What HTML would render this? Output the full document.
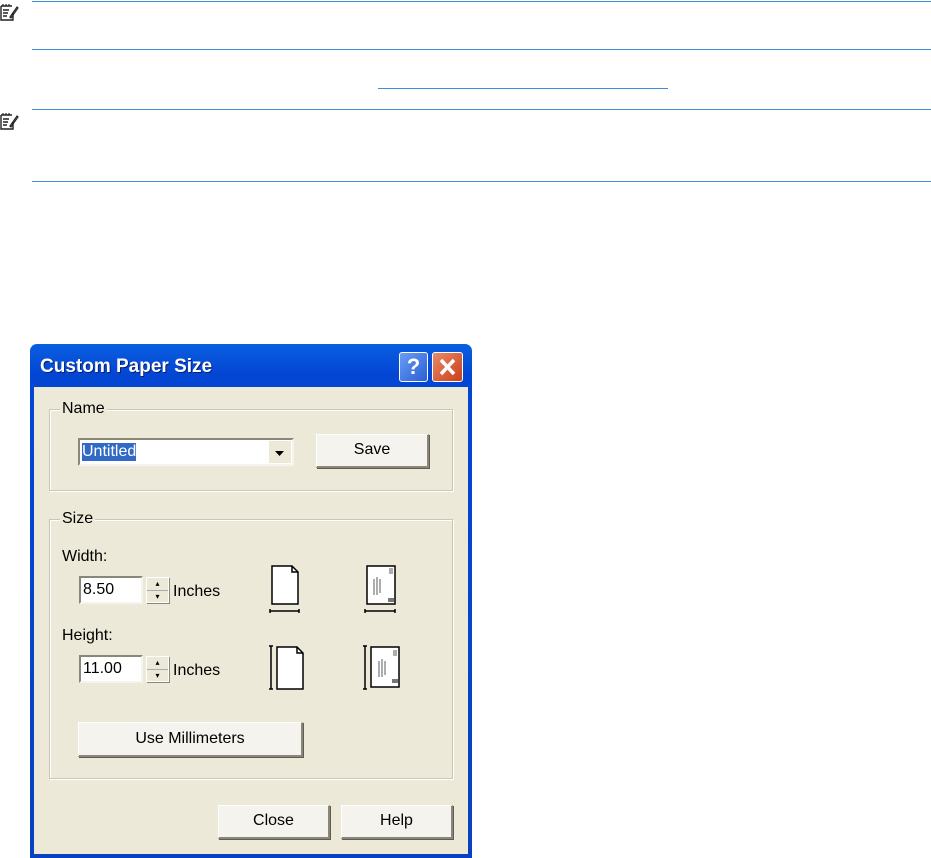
<!DOCTYPE html>
<html><head><style>
body{margin:0;width:931px;height:858px;background:#fff;position:relative;overflow:hidden;font-family:"Liberation Sans",sans-serif;}
.a{position:absolute;}
.hl{position:absolute;height:1px;background:#3f8fd8;}
.t{font-size:16px;color:#000;}
.btn{position:absolute;background:#f4f3ee;border:1px solid #fff;border-right:2px solid #8a8778;border-bottom:2px solid #8a8778;box-sizing:border-box;font-size:16px;text-align:center;box-shadow:1px 1px 0 #5e5c55;}
.grp{position:absolute;border:1px solid #c9c6b6;box-shadow:inset 1px 1px 0 #fff,1px 1px 0 #fff;}
.inp{position:absolute;background:#fff;border:2px solid;border-color:#8a8778 #f4f3ee #f4f3ee #8a8778;box-sizing:border-box;font-size:16px;}
</style></head><body>
<div class="hl" style="left:32px;top:1px;width:899px"></div>
<div class="hl" style="left:32px;top:49px;width:899px"></div>
<div class="hl" style="left:378px;top:88px;width:290px"></div>
<div class="hl" style="left:32px;top:109px;width:899px"></div>
<div class="hl" style="left:32px;top:181px;width:899px"></div>
<svg class="a" style="left:0;top:2px" width="20" height="20" viewBox="0 0 20 20"><path d="M1 4h11M1 4v14h12v-7M3 8h6M3 11h5M3 14h4" stroke="#222" fill="none" stroke-width="1.4"/><path d="M3 2v2M6 2v2M9 2v2M10 15l7-10 1 1-7 10z" stroke="#222" fill="none" stroke-width="1.2"/></svg>
<svg class="a" style="left:0;top:111px" width="20" height="20" viewBox="0 0 20 20"><path d="M1 4h11M1 4v14h12v-7M3 8h6M3 11h5M3 14h4" stroke="#222" fill="none" stroke-width="1.4"/><path d="M3 2v2M6 2v2M9 2v2M10 15l7-10 1 1-7 10z" stroke="#222" fill="none" stroke-width="1.2"/></svg>

<div class="a" style="left:30px;top:344px;width:442px;height:514px;background:linear-gradient(#0a5fe0,#0346d4 30px,#0842c0);border-radius:7px 7px 0 0"></div>
<div class="a" style="left:34px;top:387px;width:434px;height:467px;background:#ece9d8"></div>
<div class="a" style="left:40px;top:356px;color:#fff;font-weight:bold;font-size:19px;text-shadow:1px 1px 0 #0a1e6e">Custom Paper Size</div>
<div class="a" style="left:399px;top:352px;width:29px;height:30px;box-sizing:border-box;border:1px solid #fff;border-radius:3px;background:linear-gradient(135deg,#6a9cf4,#2a5fd8);color:#fff;font-size:22px;text-align:center;line-height:28px;font-weight:bold">?</div>
<div class="a" style="left:432px;top:352px;width:31px;height:30px;box-sizing:border-box;border:1px solid #fff;border-radius:3px;background:linear-gradient(135deg,#e88a6a,#c8401a)"><svg width="29" height="28"><path d="M8 7l13 14M21 7L8 21" stroke="#fff" stroke-width="3.5"/></svg></div>

<div class="grp" style="left:49px;top:409px;width:402px;height:80px"></div>
<div class="a t" style="left:60px;top:400px;background:#ece9d8;padding:0 2px">Name</div>
<div class="inp" style="left:78px;top:438px;width:216px;height:28px"><span style="position:absolute;left:2px;top:3px;background:#316ac5;color:#fff">Untitled</span>
<div class="a" style="right:0;top:0;width:24px;height:24px;background:#ece9d8;border:1px solid #fff;box-sizing:border-box"><svg width="22" height="22"><path d="M6 10h9l-4.5 5z" fill="#000"/></svg></div></div>
<div class="btn" style="left:316px;top:434px;width:113px;height:34px;line-height:30px">Save</div>

<div class="grp" style="left:49px;top:519px;width:402px;height:258px"></div>
<div class="a t" style="left:60px;top:510px;background:#ece9d8;padding:0 2px">Size</div>
<div class="a t" style="left:62px;top:548px">Width:</div>
<div class="inp" style="left:79px;top:576px;width:64px;height:28px;padding:3px 0 0 2px">8.50</div>
<div class="a" style="left:146px;top:577px;width:23px;height:26px;background:#ece9d8;border:1px solid #fff;box-sizing:border-box;box-shadow:1px 1px 0 #8a8778"><div style="border-bottom:1px solid #aaa;height:12px;text-align:center;font-size:8px;line-height:12px">▴</div><div style="text-align:center;font-size:8px;line-height:12px">▾</div></div>
<div class="a t" style="left:173px;top:583px">Inches</div>
<div class="a t" style="left:62px;top:627px">Height:</div>
<div class="inp" style="left:79px;top:655px;width:64px;height:28px;padding:3px 0 0 2px">11.00</div>
<div class="a" style="left:146px;top:656px;width:23px;height:26px;background:#ece9d8;border:1px solid #fff;box-sizing:border-box;box-shadow:1px 1px 0 #8a8778"><div style="border-bottom:1px solid #aaa;height:12px;text-align:center;font-size:8px;line-height:12px">▴</div><div style="text-align:center;font-size:8px;line-height:12px">▾</div></div>
<div class="a t" style="left:173px;top:662px">Inches</div>

<svg class="a" style="left:268px;top:564px" width="140" height="130">
<g fill="#fff" stroke="#000" stroke-width="1.5">
<path d="M4 2h20l6 6v32H4z"/><path d="M24 2v6h6" fill="none"/>
<path d="M99 2h28v38H99z"/>
<path d="M9 83h20l6 6v36H9z"/><path d="M29 83v6h6" fill="none"/>
<path d="M103 83h28v40h-28z"/>
</g>
<g stroke="#000" stroke-width="1.5"><path d="M2 47h29M2 45v4M31 45v4M97 47h30M97 45v4M127 45v4M3 82v43M1 82h4M1 125h4M97 82v43M95 82h4M95 125h4"/></g>
<g stroke="#777" stroke-width="1.2"><path d="M106 15v16M109 13v18M112 15v14M122 4v6M124 4v6M111 97v16M114 95v18M117 97v14M126 86v6M128 86v6"/></g>
<rect x="120" y="34" width="6" height="4" fill="#777"/><rect x="124" y="115" width="6" height="4" fill="#777"/>
</svg>

<div class="btn" style="left:78px;top:722px;width:225px;height:35px;line-height:31px">Use Millimeters</div>
<div class="btn" style="left:218px;top:805px;width:112px;height:34px;line-height:30px">Close</div>
<div class="btn" style="left:341px;top:805px;width:112px;height:34px;line-height:30px">Help</div>
</body></html>
